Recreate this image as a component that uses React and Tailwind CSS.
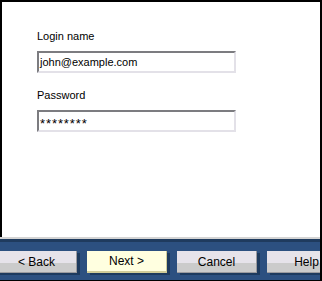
import React from 'react';

const buttons = [
  { label: '< Back', primary: false },
  { label: 'Next >', primary: true },
  { label: 'Cancel', primary: false },
  { label: 'Help', primary: false },
];

const Field = ({ label, children, className }) => (
  <div className={className}>
    <div className="h-[13px] leading-[13px] text-black">{label}</div>
    <div className="mt-[8px] flex h-[22px] w-[199px] items-center border-2 border-t-[#7c7c80] border-l-[#7c7c80] border-b-[#e3e1e8] border-r-[#e3e1e8] bg-white pl-[1px] text-black">
      {children}
    </div>
  </div>
);

const WizardButton = ({ label, primary }) => (
  <div className="relative h-[22px] w-[80px] shrink-0">
    <div className="absolute left-[3px] top-[2px] h-[22px] w-[80px] bg-[#1d3a5e]" />
    {primary ? (
      <div className="relative flex h-full w-full items-center justify-center border-b-2 border-r border-[#cfcb98] bg-[#ffffe0] text-[12px] text-black">
        {label}
      </div>
    ) : (
      <div className="relative flex h-full w-full flex-col border-r border-b border-[#9a9a9e]">
        <div className="h-[12px] bg-[#e6e3ea]" />
        <div className="flex-1 bg-[#cbcbcb]" />
        <span className="absolute inset-0 flex items-center justify-center text-[12px] text-black">
          {label}
        </span>
      </div>
    )}
  </div>
);

export default function App() {
  return (
    <div
      className="flex h-[281px] w-[322px] flex-col overflow-hidden bg-white text-[11px]"
      style={{ fontFamily: '"Liberation Sans", Arial, sans-serif' }}
    >
      {/* Page body */}
      <div className="h-[237px] border-l-2 border-r-2 border-t-2 border-black pl-[35px] pt-[28px]">
        <Field label="Login name">john@example.com</Field>
        <Field label="Password" className="mt-[16px]">
          <span className="translate-y-[2px] text-[13px] leading-none tracking-[0.9px]">********</span>
        </Field>
      </div>

      {/* Button bar */}
      <div className="flex flex-1 flex-col border-b border-r-2 border-black">
        <div className="h-[2px] bg-[#d4d4d4]" />
        <div className="h-[3px] bg-[#1f3b5e]" />
        <div className="-ml-[3px] flex flex-1 gap-[10px] overflow-hidden bg-[#2c5080] pt-[9px]">
          {buttons.map((b) => (
            <WizardButton key={b.label} label={b.label} primary={b.primary} />
          ))}
        </div>
      </div>
    </div>
  );
}
